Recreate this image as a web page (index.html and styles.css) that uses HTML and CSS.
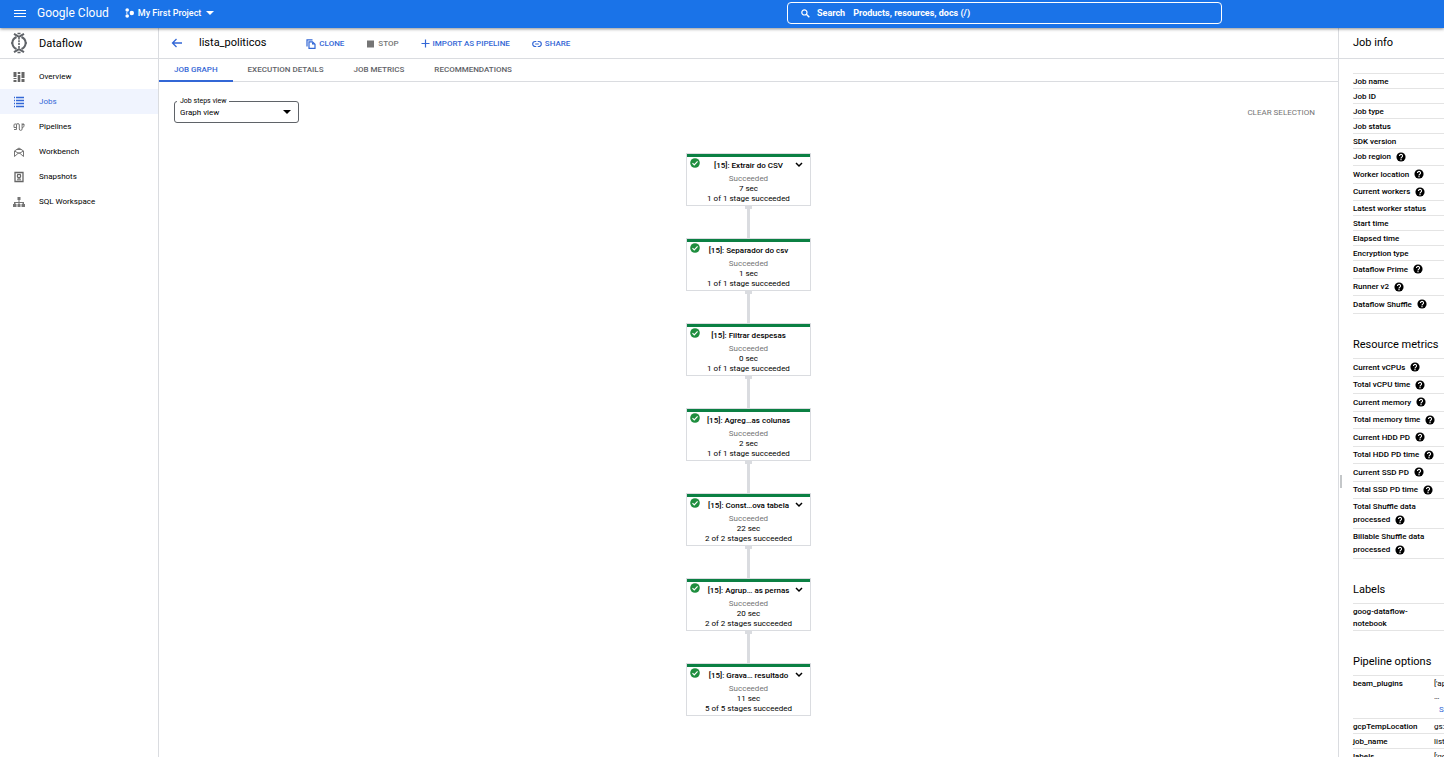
FILE: index.html
```html
<!DOCTYPE html>
<html lang="en">
<head>
<meta charset="utf-8">
<title>lista_politicos – Dataflow – Google Cloud</title>
<link rel="stylesheet" href="styles.css">
</head>
<body>
<svg class="defs" aria-hidden="true">
  <symbol id="check" viewBox="0 0 24 24"><circle cx="12" cy="12" r="11.5" fill="#1e8e3e"/><path d="M6 12.3l4.2 4.2L18.2 8.300" fill="none" stroke="#fff" stroke-width="2.800"/></symbol>
  <symbol id="chevron" viewBox="0 0 8 6"><path d="M1 1l3 3 3-3" fill="none" stroke="#000" stroke-width="1.500"/></symbol>
  <symbol id="help" viewBox="0 0 24 24"><circle cx="12" cy="12" r="11" fill="#000"/><path d="M8.300 9.500a3.700 3.500 0 1 1 5.800 2.700c-1.300 1-2.100 1.500-2.100 3.300" fill="none" stroke="#fff" stroke-width="2.600"/><rect x="10.600" y="17" width="2.800" height="2.800" fill="#fff"/></symbol>
</svg>

<header class="topbar">
  <button class="menu" aria-label="Main menu"><svg width="12" height="9" viewBox="0 0 12 9"><path d="M0 1.500h12M0 4.500h12M0 7.500h12" stroke="#fff"/></svg></button>
  <a class="brand" href="#"><span class="brand-google">Google</span> Cloud</a>
  <button class="project">
    <svg width="9" height="10" viewBox="0 0 9 10" fill="#fff"><circle cx="2.200" cy="2" r="1.800"/><circle cx="6.800" cy="5" r="2.200"/><circle cx="2.200" cy="8" r="1.800"/><circle cx="1.800" cy="5" r=".8"/></svg>
    My First Project
    <svg class="project-caret" width="8" height="4" viewBox="0 0 8 4"><path d="M0 0h8L4 4z" fill="#fff"/></svg>
  </button>
  <div class="search">
    <svg width="9" height="9" viewBox="0 0 9 9" fill="none" stroke="#fff"><circle cx="3.400" cy="3.400" r="2.600" stroke-width="1.200"/><path d="M5.300 5.300l3 3" stroke-width="1.400"/></svg>
    <label for="q">Search</label>
    <input id="q" type="text" placeholder="Products, resources, docs (/)">
  </div>
</header>

<div class="shell">
  <aside class="sidebar">
    <div class="product">
      <svg width="16" height="22" viewBox="0 0 16 22" fill="none" stroke="#5f6368" stroke-width="2"><path d="M3 1.800l5 3 5-3M3 20.200l5-3 5 3"/><path d="M5.500 5C0 7.500 0 14.500 5.500 17M10.500 5c5.500 2.500 5.500 9.500 0 12"/><path d="M8 5.500v11" stroke-dasharray="2 .8" stroke-width="1.600"/><path d="M0 11h2M14 11h2M6.500 1.500h3M6.500 20.500h3" stroke-width="1.500"/></svg>
      <span>Dataflow</span>
    </div>
    <nav class="nav" aria-label="Dataflow">
      <a href="#"><svg width="12" height="12" viewBox="0 0 12 12" fill="#666"><path d="M.5 1h3v5h-3zM.5 7h3v1h-3zM.5 9h3v2h-3zM4.700 1h2.600v2H4.700zM4.700 4h2.600v7H4.700zM8.500 1h3v6h-3zM8.500 8h3v3h-3z"/></svg>Overview</a>
      <a class="active" href="#" aria-current="page"><svg width="12" height="12" viewBox="0 0 12 12" stroke="#3367d6" fill="none"><path d="M1 1.500h1M3 1.500h8M1 4.500h1M3 4.500h8M1 7.500h1M3 7.500h8M1 10.500h1M3 10.500h8" stroke-width="1.300"/></svg>Jobs</a>
      <a href="#"><svg width="12" height="12" viewBox="0 0 12 12" fill="none" stroke="#757575"><path d="M1 8.500h2.500V4a1.400 1.400 0 0 1 2.800 0v4a1.400 1.400 0 0 0 2.800 0V3.500H11M3.500 3H2a1 1 0 0 0-1 1v2.500h2.500M8.500 3H11v2.500L9 7"/></svg>Pipelines</a>
      <a href="#"><svg width="12" height="12" viewBox="0 0 12 12" fill="none" stroke="#757575"><path d="M1.500 10.500V5L6 2l4.500 3v5.500L6 6.500zM1.500 5L6 7.500 10.500 5M3.500 3.500h5"/></svg>Workbench</a>
      <a href="#"><svg width="12" height="12" viewBox="0 0 12 12" fill="none" stroke="#666"><path d="M2 1.500h8v9H2z" stroke-width="1.300"/><circle cx="6" cy="5" r="1.700" stroke-width="1.200"/><path d="M4 8.800h4M4 3.300h.8M7.300 3.300H8M4.500 7.200h3"/></svg>Snapshots</a>
      <a href="#"><svg width="12" height="12" viewBox="0 0 12 12" fill="#757575"><path d="M4.500 1h3v3h-1v2H11v2h1v3H8.500V8h1V7h-3v1h1v3h-3V8h1V7h-3v1h1v3H0V8h1V6h4.500V4h-1z"/></svg>SQL Workspace</a>
    </nav>
  </aside>

  <main class="main">
    <div class="toolbar">
      <button class="back" aria-label="Back"><svg width="12" height="10" viewBox="0 0 12 10" fill="none" stroke="#3367d6" stroke-width="1.300"><path d="M11 5H1.500M5.500 1l-4 4 4 4"/></svg></button>
      <h1>lista_politicos</h1>
      <div class="actions">
        <button><svg width="10" height="10" viewBox="0 0 10 10" fill="none" stroke="#3367d6" stroke-width="1.200"><path d="M1 7.500V.8h5.500"/><path d="M3 2.800h3.500L9 5.200v4.200H3z"/><path d="M6 3v2.500h3z" fill="#3367d6" stroke="none"/></svg>CLONE</button>
        <button class="muted" disabled><svg width="9" height="8" viewBox="0 0 9 8"><path d="M1 .5h7v7H1z" fill="#757575"/></svg>STOP</button>
        <button><svg width="9" height="9" viewBox="0 0 9 9"><path d="M4.500 .5v8M.5 4.500h8" stroke="#3367d6" stroke-width="1.200"/></svg>IMPORT AS PIPELINE</button>
        <button><svg width="10" height="8" viewBox="0 0 10 8" fill="none" stroke="#3367d6" stroke-width="1.200"><path d="M4.300 1.500H3.200a2.500 2.500 0 0 0 0 5h1.100M5.700 1.500h1.100a2.500 2.500 0 0 1 0 5H5.700M3.200 4h3.600"/></svg>SHARE</button>
      </div>
    </div>
    <div class="tabs" role="tablist">
      <button role="tab" aria-selected="true">JOB GRAPH</button>
      <button role="tab" aria-selected="false">EXECUTION DETAILS</button>
      <button role="tab" aria-selected="false">JOB METRICS</button>
      <button role="tab" aria-selected="false">RECOMMENDATIONS</button>
    </div>
    <div class="controls">
      <div class="field">
        <label for="view">Job steps view</label>
        <select id="view"><option>Graph view</option></select>
        <svg class="field-caret" width="8" height="4" viewBox="0 0 8 4"><path d="M0 0h8L4 4z"/></svg>
      </div>
      <button class="clear" disabled>CLEAR SELECTION</button>
    </div>

    <div class="graph">
      <section class="node"><svg class="check"><use href="#check"/></svg><h2>[15]: Extrair do CSV</h2><button class="expand" aria-label="Expand"><svg width="8" height="6"><use href="#chevron"/></svg></button><p class="status">Succeeded</p><p>7 sec</p><p>1 of 1 stage succeeded</p></section>
      <section class="node"><svg class="check"><use href="#check"/></svg><h2>[15]: Separador do csv</h2><p class="status">Succeeded</p><p>1 sec</p><p>1 of 1 stage succeeded</p></section>
      <section class="node"><svg class="check"><use href="#check"/></svg><h2>[15]: Filtrar despesas</h2><p class="status">Succeeded</p><p>0 sec</p><p>1 of 1 stage succeeded</p></section>
      <section class="node"><svg class="check"><use href="#check"/></svg><h2>[15]: Agreg…as colunas</h2><p class="status">Succeeded</p><p>2 sec</p><p>1 of 1 stage succeeded</p></section>
      <section class="node"><svg class="check"><use href="#check"/></svg><h2>[15]: Const…ova tabela</h2><button class="expand" aria-label="Expand"><svg width="8" height="6"><use href="#chevron"/></svg></button><p class="status">Succeeded</p><p>22 sec</p><p>2 of 2 stages succeeded</p></section>
      <section class="node"><svg class="check"><use href="#check"/></svg><h2>[15]: Agrup… as pernas</h2><button class="expand" aria-label="Expand"><svg width="8" height="6"><use href="#chevron"/></svg></button><p class="status">Succeeded</p><p>20 sec</p><p>2 of 2 stages succeeded</p></section>
      <section class="node"><svg class="check"><use href="#check"/></svg><h2>[15]: Grava… resultado</h2><button class="expand" aria-label="Expand"><svg width="8" height="6"><use href="#chevron"/></svg></button><p class="status">Succeeded</p><p>11 sec</p><p>5 of 5 stages succeeded</p></section>
    </div>
  </main>

  <aside class="info">
    <div class="grip"></div>
    <h2 class="info-title">Job info</h2>
    <div class="info-body">
      <table>
        <tr><th>Job name</th><td></td></tr>
        <tr><th>Job ID</th><td></td></tr>
        <tr><th>Job type</th><td></td></tr>
        <tr><th>Job status</th><td></td></tr>
        <tr><th>SDK version</th><td></td></tr>
        <tr class="tall"><th>Job region<svg class="help"><use href="#help"/></svg></th><td></td></tr>
        <tr class="tall"><th>Worker location<svg class="help"><use href="#help"/></svg></th><td></td></tr>
        <tr class="tall"><th>Current workers<svg class="help"><use href="#help"/></svg></th><td></td></tr>
        <tr><th>Latest worker status</th><td></td></tr>
        <tr><th>Start time</th><td></td></tr>
        <tr><th>Elapsed time</th><td></td></tr>
        <tr><th>Encryption type</th><td></td></tr>
        <tr class="tall"><th>Dataflow Prime<svg class="help"><use href="#help"/></svg></th><td></td></tr>
        <tr class="tall"><th>Runner v2<svg class="help"><use href="#help"/></svg></th><td></td></tr>
        <tr class="tall"><th>Dataflow Shuffle<svg class="help"><use href="#help"/></svg></th><td></td></tr>
      </table>
      <h3>Resource metrics</h3>
      <table>
        <tr class="tall"><th>Current vCPUs<svg class="help"><use href="#help"/></svg></th><td></td></tr>
        <tr class="tall"><th>Total vCPU time<svg class="help"><use href="#help"/></svg></th><td></td></tr>
        <tr class="tall"><th>Current memory<svg class="help"><use href="#help"/></svg></th><td></td></tr>
        <tr class="tall"><th>Total memory time<svg class="help"><use href="#help"/></svg></th><td></td></tr>
        <tr class="tall"><th>Current HDD PD<svg class="help"><use href="#help"/></svg></th><td></td></tr>
        <tr class="tall"><th>Total HDD PD time<svg class="help"><use href="#help"/></svg></th><td></td></tr>
        <tr class="tall"><th>Current SSD PD<svg class="help"><use href="#help"/></svg></th><td></td></tr>
        <tr class="tall"><th>Total SSD PD time<svg class="help"><use href="#help"/></svg></th><td></td></tr>
        <tr class="double"><th>Total Shuffle data<br>processed<svg class="help"><use href="#help"/></svg></th><td></td></tr>
        <tr class="double"><th>Billable Shuffle data<br>processed<svg class="help"><use href="#help"/></svg></th><td></td></tr>
      </table>
      <h3>Labels</h3>
      <table>
        <tr class="label-row"><th>goog-dataflow-<br>notebook</th><td></td></tr>
      </table>
      <h3>Pipeline options</h3>
      <table>
        <tr class="plugins"><th>beam_plugins</th><td>['ap<br>…<br><a href="#">S</a></td></tr>
        <tr><th>gcpTempLocation</th><td>gs:</td></tr>
        <tr><th>job_name</th><td>list</td></tr>
        <tr><th>labels</th><td>['go</td></tr>
      </table>
    </div>
  </aside>
</div>
</body>
</html>
```
FILE: styles.css
```css
* { box-sizing: border-box; }

body {
  margin: 0;
  height: calc(100vh - 7px);
  display: flex;
  flex-direction: column;
  overflow: hidden;
  background: #fff;
  color: #000;
  font: 8px/12px Roboto, sans-serif;
}

button {
  display: flex;
  align-items: center;
  padding: 0;
  border: 0;
  background: none;
  color: inherit;
  font: inherit;
  white-space: nowrap;
}

a { color: inherit; text-decoration: none; }
h1, h2, h3, p { margin: 0; font-weight: 400; }
svg { display: block; flex: none; }
.defs { position: absolute; width: 0; height: 0; }

.topbar {
  flex: none;
  height: 28px;
  display: flex;
  align-items: center;
  padding: 0 222px 2px 14px;
  background: #1a73e8;
  color: #fff;
  box-shadow: 0 1px 3px rgba(0, 0, 0, .45);
  z-index: 1;
}

.brand { margin-left: 11px; font: 12px/16px Roboto, sans-serif; }
.project { margin-left: 16px; gap: 4px; font-size: 9px; font-weight: 500; }
.project-caret { margin-left: 1px; }

.search {
  flex: 0 1 435px;
  height: 22px;
  margin-left: auto;
  display: flex;
  align-items: center;
  padding: 0 13px;
  border: 1px solid #fff;
  border-radius: 4px;
  font-size: 9px;
  font-weight: 700;
}

.search label { margin-left: 7px; }

.search input {
  flex: 1;
  min-width: 0;
  margin-left: 8px;
  padding: 0;
  border: 0;
  outline: 0;
  background: none;
  color: #fff;
  font: inherit;
}

.search input::placeholder { color: #fff; opacity: 1; }

.shell { flex: 1; min-height: 0; display: flex; }

.sidebar { flex: none; width: 159px; border-right: 1px solid #dadce0; }

.product {
  height: 31px;
  display: flex;
  align-items: center;
  gap: 12px;
  padding-left: 11px;
  border-bottom: 1px solid #dadce0;
  font-size: 11px;
}

.product span { padding-top: 1px; }

.nav { padding-top: 5px; }

.nav a {
  height: 25px;
  display: flex;
  align-items: center;
  gap: 14px;
  padding-left: 13px;
}

.nav .active { background: #f0f4fe; color: #3367d6; }

.main { flex: 1; min-width: 0; }

.toolbar {
  height: 31px;
  display: flex;
  align-items: center;
  padding-left: 12px;
  border-bottom: 1px solid #dadce0;
}

.toolbar h1 { margin-left: 16px; font-size: 11px; }

.actions {
  display: flex;
  gap: 22px;
  margin-left: 40px;
  padding-top: 1px;
  color: #3367d6;
  font-size: 8px;
  font-weight: 500;
}

.actions button { gap: 3px; }
.actions .muted { color: #757575; }

.tabs {
  height: 23px;
  display: flex;
  border-bottom: 1px solid #dadce0;
  color: #5f6368;
  font-weight: 500;
}

.tabs button { height: 23px; padding: 1px 15px 0; border-bottom: 2px solid transparent; }
.tabs [aria-selected="true"] { border-color: #3367d6; color: #3367d6; }

.controls {
  height: 71px;
  display: flex;
  justify-content: space-between;
  align-items: flex-start;
  padding: 19px 23px 0 15px;
}

.field { position: relative; width: 125px; }

.field label {
  position: absolute;
  top: -6px;
  left: 3px;
  padding: 0 3px;
  background: #fff;
  font-size: 7px;
}

.field select {
  display: block;
  width: 100%;
  height: 22px;
  padding: 1px 5px 0;
  border: 1px solid #5f6368;
  border-radius: 3px;
  appearance: none;
  background: #fff;
  color: #000;
  font: inherit;
}

.field-caret { position: absolute; top: 9px; right: 8px; }
.clear { height: 22px; padding-top: 1px; color: #757575; }

.graph { display: flex; flex-direction: column; align-items: center; gap: 32px; }

.node {
  position: relative;
  width: 125px;
  height: 53px;
  border: 1px solid #dadce0;
  line-height: 10px;
  text-align: center;
}

.node::before {
  content: "";
  display: block;
  height: 3px;
  background: #0b8043;
}

.node:not(:last-child)::after {
  content: "";
  position: absolute;
  top: 52px;
  left: 57px;
  width: 9px;
  height: 32px;
  background:
    radial-gradient(circle at 50% 0, #dadce0 4px, transparent 4px),
    linear-gradient(#dadce0, #dadce0) center / 3px 100% no-repeat;
}

.node h2 { padding: 4px 0 3px; font-size: 8px; font-weight: 500; }
.node .status { color: #757575; }
.check { position: absolute; top: 4px; left: 3px; width: 10px; height: 10px; }
.expand { position: absolute; top: 8px; right: 7px; }

.info {
  position: relative;
  flex: none;
  width: 106px;
  overflow: hidden;
  border-left: 1px solid #dadce0;
}

.grip { position: absolute; top: 447px; left: 1px; width: 2px; height: 13px; background: #c4c7c9; }

.info-title {
  height: 31px;
  padding: 8px 14px;
  border-bottom: 1px solid #dadce0;
  font-size: 11px;
  line-height: 14px;
}

.info-body { padding: 14px 0 0 14px; }

.info h3 {
  padding: 24px 0 7px;
  font-size: 11px;
  line-height: 13px;
  white-space: nowrap;
}

.info table {
  width: 240px;
  table-layout: fixed;
  border-collapse: separate;
  border-spacing: 0;
  border-top: 1px solid #e4e4e4;
}

.info th, .info td {
  padding: 1px 0 0;
  border-bottom: 1px solid #e4e4e4;
  text-align: left;
  white-space: nowrap;
}

.info th { width: 81px; font-weight: 500; }
.info td a { padding-left: 5px; color: #3367d6; }

.info tr { height: 15px; }
.info .tall:nth-child(odd) { height: 18px; }
.info .tall:nth-child(even) { height: 17px; }
.info .tall th { padding: 0; }
.info .double { height: 30px; }
.info .double th { padding: 0 0 1px; line-height: 13px; }
.info .label-row { height: 27px; }
.info .plugins { height: 43px; line-height: 13px; vertical-align: top; }

.help { display: inline-block; width: 10px; height: 10px; margin-left: 5px; vertical-align: middle; }
```
